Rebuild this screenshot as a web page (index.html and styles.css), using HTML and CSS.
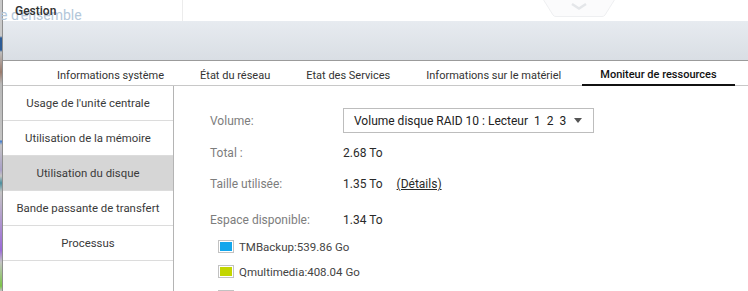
FILE: index.html
```html
<!DOCTYPE html>
<html lang="fr">
<head>
    <meta charset="UTF-8">
    <title>Gestion - Moniteur de ressources</title>
    <link rel="stylesheet" href="styles.css">
</head>
<body>
    <div class="desk"></div>
    <div class="window">
        <div class="titlebar">
            <span class="ghost">e d'ensemble</span>
            <span class="title">Gestion</span>
            <span class="title-sep"></span>
            <svg class="pull" width="72" height="18" viewBox="0 0 72 18">
                <path d="M0 0 L10 16 Q11 17.5 13 17.5 L59 17.5 Q61 17.5 62 16 L72 0" fill="#fbfbfc" stroke="#eeeff1"/>
                <path d="M29 5 L36 9.5 L43 5" fill="none" stroke="#e4e6e9" stroke-width="2.5"/>
            </svg>
        </div>
        <div class="band"></div>
        <div class="tabs">
            <span class="tab">Informations système</span>
            <span class="tab">État du réseau</span>
            <span class="tab">Etat des Services</span>
            <span class="tab">Informations sur le matériel</span>
            <span class="tab active">Moniteur de ressources</span>
        </div>
        <div class="main">
            <div class="nav">
                <div class="nav-item">Usage de l'unité centrale</div>
                <div class="nav-item">Utilisation de la mémoire</div>
                <div class="nav-item selected">Utilisation du disque</div>
                <div class="nav-item">Bande passante de transfert</div>
                <div class="nav-item">Processus</div>
            </div>
            <div class="content">
                <div class="row row-volume">
                    <span class="label">Volume:</span>
                    <div class="select">
                        <span>Volume disque RAID 10 : Lecteur&nbsp; 1&nbsp; 2&nbsp; 3</span>
                        <span class="arrow"></span>
                    </div>
                </div>
                <div class="row row-total">
                    <span class="label">Total :</span>
                    <span class="value">2.68 To</span>
                </div>
                <div class="row row-used">
                    <span class="label">Taille utilisée:</span>
                    <span class="value">1.35 To</span>
                    <a class="details" href="#">(Détails)</a>
                </div>
                <div class="row row-free">
                    <span class="label">Espace disponible:</span>
                    <span class="value">1.34 To</span>
                </div>
                <div class="legend">
                    <div class="legend-item"><span class="swatch"><i class="c-blue"></i></span>TMBackup:539.86 Go</div>
                    <div class="legend-item"><span class="swatch"><i class="c-lime"></i></span>Qmultimedia:408.04 Go</div>
                    <div class="legend-item"><span class="swatch"><i class="c-grey"></i></span>Public:392.10 Go</div>
                </div>
            </div>
        </div>
    </div>
</body>
</html>
```

FILE: styles.css
```css
html, body {
    margin: 0;
    height: 100%;
}
body {
    display: flex;
    width: 748px;
    height: 291px;
    overflow: hidden;
    font-family: Roboto, "Liberation Sans", sans-serif;
    font-size: 12px;
    color: #333;
    background: #fff;
}
.desk {
    flex-shrink: 0;
    width: 2px;
    border-right: 1px solid #8e8e8e;
    background: linear-gradient(to bottom, #c9c9c9 0, #c9c9c9 36px, #2d5c96 38px, #2d5c96 50px, #bdbdbd 52px, #9a7b6c 72px, #b8b8b8 84px, #c4c4c4 140px, #3a78d0 141px, #c4c4c4 145px, #a9a0c8 170px, #c4c4c4 176px, #4b8f9e 183px, #c4c4c4 192px, #9b6ad8 250px, #c4c4c4 262px, #7cc548 286px, #c4c4c4 291px);
}
.window {
    flex: 1;
    display: flex;
    flex-direction: column;
    min-width: 0;
    min-height: 0;
}
.titlebar {
    position: relative;
    flex-shrink: 0;
    height: 21px;
    display: flex;
    align-items: center;
    background: #fff;
}
.title {
    position: relative;
    padding-left: 12px;
    font-weight: 500;
    color: #2f2f2f;
}
.ghost {
    position: absolute;
    left: -3px;
    top: 7px;
    font-size: 14px;
    color: #b3c7da;
}
.title-sep {
    position: absolute;
    left: 179px;
    top: 0;
    height: 21px;
    border-left: 1px solid #ececec;
}
.pull {
    position: absolute;
    left: 540px;
    top: -1px;
}
.band {
    flex-shrink: 0;
    height: 39px;
    background: linear-gradient(to bottom, #e7ebf0, #d9dee4);
    border-bottom: 1px solid #9b9b9b;
}
.tabs {
    flex-shrink: 0;
    display: flex;
    height: 24px;
    padding-left: 36px;
    border-bottom: 1px solid #c8c8c8;
    font-size: 11px;
}
.tab {
    padding: 5px 18px 0;
    line-height: 19px;
    color: #333;
    white-space: nowrap;
}
.tab:nth-child(4) {
    padding-right: 21px;
}
.tab.active {
    font-weight: 500;
    color: #111;
    border-bottom: 2px solid #111;
    margin-bottom: -1px;
    line-height: 18px;
}
.main {
    flex: 1;
    display: flex;
    min-height: 0;
}
.nav {
    flex-shrink: 0;
    width: 170px;
    border-right: 1px solid #b4b4b4;
    font-size: 11.4px;
}
.nav-item {
    height: 34px;
    line-height: 34px;
    text-align: center;
    color: #3a3a3a;
    border-bottom: 1px solid #dcdcdc;
    white-space: nowrap;
}
.nav-item.selected {
    background: #d6d6d6;
}
.content {
    flex: 1;
    padding: 18px 0 0 36px;
}
.row {
    display: flex;
    align-items: center;
}
.label {
    width: 133px;
    color: #7d7d7d;
}
.value {
    color: #2a2a2a;
}
.row-volume {
    height: 33px;
}
.row-total {
    height: 31px;
}
.row-used {
    height: 32px;
}
.row-free {
    height: 33px;
    margin-top: 3px;
}
.details {
    margin-left: 14px;
    color: #2a2a2a;
}
.select {
    width: 228px;
    height: 23px;
    padding: 0 11px 0 10px;
    display: flex;
    align-items: center;
    justify-content: space-between;
    border: 1px solid #bdbdbd;
    font-size: 12px;
    color: #222;
    white-space: nowrap;
}
.arrow {
    width: 0;
    height: 0;
    border-left: 4px solid transparent;
    border-right: 4px solid transparent;
    border-top: 5px solid #555;
}
.legend {
    margin-top: -2px;
    padding-left: 8px;
}
.legend-item {
    height: 25px;
    display: flex;
    align-items: center;
    font-size: 11.5px;
    color: #444;
}
.swatch {
    width: 12px;
    height: 9px;
    padding: 1px;
    margin-right: 5px;
    border: 1px solid #c2c2c2;
    background: #fff;
}
.swatch i {
    display: block;
    height: 100%;
}
.c-blue {
    background: #12a6ec;
}
.c-lime {
    background: #c3d600;
}
.c-grey {
    background: #9c9c9c;
}
```
